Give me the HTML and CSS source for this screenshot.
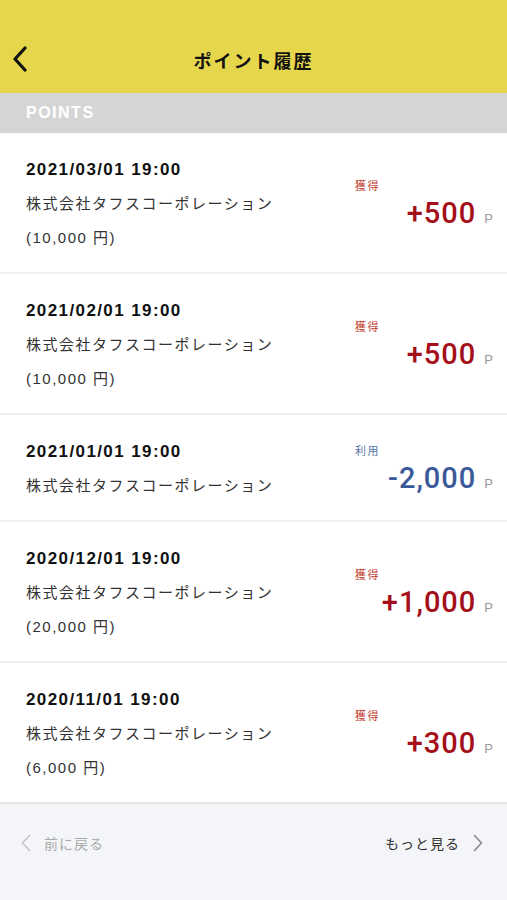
FILE: index.html
```html
<!DOCTYPE html>
<html lang="ja">

<head>
    <meta charset="UTF-8" />
    <meta name="viewport" content="width=device-width, initial-scale=1.0" />
    <title>ポイント履歴</title>
    <link rel="stylesheet" href="styles.css">
</head>

<body>

    <header class="header">
        <a class="back" href="#">
            <svg width="18" height="26" viewBox="0 0 18 26">
                <path d="M14 2 L4 13 L14 24" fill="none" stroke="#111" stroke-width="3.2" stroke-linecap="round" stroke-linejoin="round" />
            </svg>
        </a>
        <h1 class="title">ポイント履歴</h1>
    </header>

    <div class="section">POINTS</div>

    <ul class="history">
        <li class="item">
            <div class="info">
                <div class="date">2021/03/01 19:00</div>
                <div class="shop">株式会社タフスコーポレーション</div>
                <div class="price">(10,000 円)</div>
            </div>
            <div class="points earn">
                <span class="kind">獲得</span>
                <div class="amount"><span class="num">+500</span><span class="unit">P</span></div>
            </div>
        </li>
        <li class="item">
            <div class="info">
                <div class="date">2021/02/01 19:00</div>
                <div class="shop">株式会社タフスコーポレーション</div>
                <div class="price">(10,000 円)</div>
            </div>
            <div class="points earn">
                <span class="kind">獲得</span>
                <div class="amount"><span class="num">+500</span><span class="unit">P</span></div>
            </div>
        </li>
        <li class="item">
            <div class="info">
                <div class="date">2021/01/01 19:00</div>
                <div class="shop">株式会社タフスコーポレーション</div>
            </div>
            <div class="points use">
                <span class="kind">利用</span>
                <div class="amount"><span class="num">-2,000</span><span class="unit">P</span></div>
            </div>
        </li>
        <li class="item">
            <div class="info">
                <div class="date">2020/12/01 19:00</div>
                <div class="shop">株式会社タフスコーポレーション</div>
                <div class="price">(20,000 円)</div>
            </div>
            <div class="points earn">
                <span class="kind">獲得</span>
                <div class="amount"><span class="num">+1,000</span><span class="unit">P</span></div>
            </div>
        </li>
        <li class="item">
            <div class="info">
                <div class="date">2020/11/01 19:00</div>
                <div class="shop">株式会社タフスコーポレーション</div>
                <div class="price">(6,000 円)</div>
            </div>
            <div class="points earn">
                <span class="kind">獲得</span>
                <div class="amount"><span class="num">+300</span><span class="unit">P</span></div>
            </div>
        </li>
    </ul>

    <nav class="pager">
        <a class="prev" href="#">
            <svg width="10" height="18" viewBox="0 0 10 18">
                <path d="M8.5 1.5 L1.5 9 L8.5 16.5" fill="none" stroke="#c4c4c4" stroke-width="1.6" stroke-linecap="round" stroke-linejoin="round" />
            </svg>
            前に戻る
        </a>
        <a class="next" href="#">
            もっと見る
            <svg width="10" height="18" viewBox="0 0 10 18">
                <path d="M1.5 1.5 L8.5 9 L1.5 16.5" fill="none" stroke="#8a8a8a" stroke-width="1.6" stroke-linecap="round" stroke-linejoin="round" />
            </svg>
        </a>
    </nav>

</body>

</html>
```

FILE: styles.css
```css
body {
    margin: 0;
    padding: 0;
    background-color: #f3f5f8;
    font-family: "Liberation Sans", "Noto Sans CJK JP", sans-serif;
    color: #222;
}

a {
    text-decoration: none;
    color: inherit;
}

.header {
    background-color: #e6d64b;
    height: 66px;
    padding-top: 27px;
    display: flex;
    align-items: center;
    justify-content: center;
    position: relative;
}

.back {
    position: absolute;
    left: 11px;
    top: 46px;
    display: flex;
}

.title {
    margin: 0;
    font-size: 18px;
    font-weight: bold;
    letter-spacing: 2px;
    color: #111;
}

.section {
    background-color: #d5d5d5;
    color: #fff;
    font-size: 16px;
    font-weight: bold;
    letter-spacing: 1.5px;
    height: 40px;
    line-height: 40px;
    padding-left: 26px;
}

.history {
    list-style: none;
    margin: 0;
    padding: 0;
    background: #fff;
}

.item {
    display: flex;
    align-items: center;
    padding: 20px 14px 17px 26px;
    border-bottom: 2px solid #efefef;
}

.item:last-child {
    border-bottom-color: #e3e3e3;
}

.info {
    flex: 1;
    line-height: 34px;
}

.date {
    font-size: 17px;
    font-weight: bold;
    letter-spacing: 1.4px;
    color: #111;
}

.shop,
.price {
    font-size: 15px;
    letter-spacing: 1.5px;
    color: #333;
}

.points {
    width: 138px;
    display: flex;
    flex-direction: column;
}

.kind {
    font-size: 11px;
    letter-spacing: 1.5px;
    line-height: 16px;
}

.amount {
    display: flex;
    justify-content: flex-end;
    align-items: baseline;
    gap: 8px;
    margin-top: 2px;
}

.num {
    font-family: Roboto, "Liberation Sans", sans-serif;
    font-size: 29px;
    font-weight: 500;
    letter-spacing: 1px;
    line-height: 34px;
}

.unit {
    font-size: 13px;
    color: #999;
}

.earn .kind {
    color: #c0392b;
}

.earn .num {
    color: #a50f1a;
}

.use .kind {
    color: #5a73a8;
}

.use .num {
    color: #3b5998;
}

.pager {
    display: flex;
    justify-content: space-between;
    align-items: center;
    padding: 29px 24px 0 21px;
    font-size: 14px;
    letter-spacing: 1px;
}

.pager a {
    display: flex;
    align-items: center;
    gap: 13px;
}

.prev {
    color: #aaa;
}

.next {
    color: #333;
}
```
